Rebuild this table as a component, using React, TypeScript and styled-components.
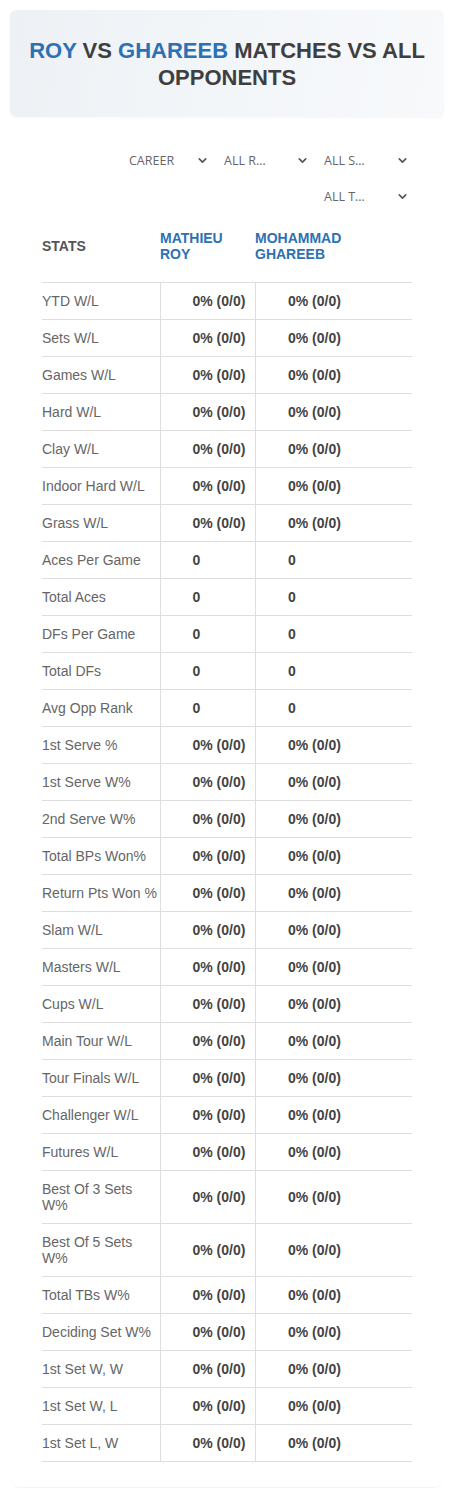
import React from "react";
import styled, { createGlobalStyle } from "styled-components";
import { ChevronDown } from "lucide-react";

const Global = createGlobalStyle`
  html, body { margin: 0; padding: 0; background: #ffffff; }
  body { font-family: "Liberation Sans", Arial, sans-serif; }
  * { box-sizing: border-box; }
`;

const Page = styled.div`
  padding: 10px 11px 10px 10px;
  display: flex;
  flex-direction: column;
  gap: 8px;
`;

const Hero = styled.header`
  height: 107px;
  border-radius: 6px;
  background: linear-gradient(100deg, #edf1f5 0%, #f3f6f9 50%, #f7f9fb 100%);
  box-shadow: 0 1px 2px rgba(0, 0, 0, 0.03);
  display: flex;
  align-items: center;
  justify-content: center;
  padding: 0 12px;
`;

const Title = styled.h1`
  margin: 0;
  text-align: center;
  font-family: "Liberation Sans", Arial, sans-serif;
  font-weight: 700;
  font-size: 22px;
  line-height: 27px;
  color: #3f3f3f;
  text-transform: uppercase;
`;

const Blue = styled.span`
  color: #2c71b3;
`;

const Card = styled.section`
  margin: 0 2px;
  background: #ffffff;
  border-radius: 8px;
  box-shadow: 0 1px 1px rgba(0, 0, 0, 0.05);
  padding: 17px 30px 25px 30px;
`;

const Filters = styled.div`
  display: flex;
  flex-wrap: wrap;
  justify-content: flex-end;
`;

const Select = styled.div<{ $w: number }>`
  width: ${(p) => p.$w}px;
  height: 36px;
  display: flex;
  align-items: center;
  justify-content: space-between;
  padding: 0 3px 0 12px;
  font-family: "Open Sans", "Liberation Sans", sans-serif;
  font-size: 12.5px;
  color: #666;
  text-transform: uppercase;
  svg {
    color: #555;
  }
`;

const Table = styled.table`
  width: 100%;
  border-collapse: collapse;
  table-layout: fixed;
`;

const HeadCell = styled.th<{ $blue?: boolean }>`
  text-align: left;
  vertical-align: middle;
  padding: 16px 8px 20px 0;
  font-size: 14px;
  line-height: 16px;
  font-weight: 700;
  text-transform: uppercase;
  color: ${(p) => (p.$blue ? "#2c71b3" : "#555")};
  border-bottom: 1px solid #dedede;
`;

const Row = styled.tr`
  border-bottom: 1px solid #dedede;
`;

const Label = styled.td`
  padding: 10px 0;
  font-size: 14px;
  line-height: 16px;
  color: #666;
  vertical-align: middle;
`;

const Value = styled.td<{ $divider?: boolean }>`
  padding: 10px 10px 10px 0;
  font-size: 14px;
  line-height: 16px;
  font-weight: 700;
  color: #444;
  text-align: right;
  vertical-align: middle;
  border-left: ${(p) => (p.$divider ? "1px solid #dedede" : "none")};
  white-space: nowrap;
`;

const Empty = styled.td``;

const pct = "0% (0/0)";
const rows: [string, string][] = [
  ["YTD W/L", pct],
  ["Sets W/L", pct],
  ["Games W/L", pct],
  ["Hard W/L", pct],
  ["Clay W/L", pct],
  ["Indoor Hard W/L", pct],
  ["Grass W/L", pct],
  ["Aces Per Game", "0"],
  ["Total Aces", "0"],
  ["DFs Per Game", "0"],
  ["Total DFs", "0"],
  ["Avg Opp Rank", "0"],
  ["1st Serve %", pct],
  ["1st Serve W%", pct],
  ["2nd Serve W%", pct],
  ["Total BPs Won%", pct],
  ["Return Pts Won %", pct],
  ["Slam W/L", pct],
  ["Masters W/L", pct],
  ["Cups W/L", pct],
  ["Main Tour W/L", pct],
  ["Tour Finals W/L", pct],
  ["Challenger W/L", pct],
  ["Futures W/L", pct],
  ["Best Of 3 Sets W%", pct],
  ["Best Of 5 Sets W%", pct],
  ["Total TBs W%", pct],
  ["Deciding Set W%", pct],
  ["1st Set W, W", pct],
  ["1st Set W, L", pct],
  ["1st Set L, W", pct],
];

const ValueText = styled.span`
  display: inline-block;
  width: 52px;
  text-align: left;
`;

export default function App() {
  return (
    <>
      <Global />
      <Page>
        <Hero>
          <Title>
            <Blue>Roy</Blue> vs <Blue>Ghareeb</Blue> Matches vs All Opponents
          </Title>
        </Hero>
        <Card>
          <Filters>
            <Select $w={95}>
              <span>Career</span>
              <ChevronDown size={13} strokeWidth={3} />
            </Select>
            <Select $w={100}>
              <span>All R…</span>
              <ChevronDown size={13} strokeWidth={3} />
            </Select>
            <Select $w={100}>
              <span>All S…</span>
              <ChevronDown size={13} strokeWidth={3} />
            </Select>
            <Select $w={100}>
              <span>All T…</span>
              <ChevronDown size={13} strokeWidth={3} />
            </Select>
          </Filters>
          <Table>
            <colgroup>
              <col style={{ width: 118 }} />
              <col style={{ width: 95 }} />
              <col style={{ width: 95 }} />
              <col />
            </colgroup>
            <thead>
              <tr>
                <HeadCell>Stats</HeadCell>
                <HeadCell $blue>Mathieu Roy</HeadCell>
                <HeadCell $blue>Mohammad Ghareeb</HeadCell>
                <HeadCell />
              </tr>
            </thead>
            <tbody>
              {rows.map(([label, v]) => (
                <Row key={label}>
                  <Label>{label}</Label>
                  <Value $divider>
                    <ValueText>{v}</ValueText>
                  </Value>
                  <Value $divider>
                    <ValueText>{v}</ValueText>
                  </Value>
                  <Empty />
                </Row>
              ))}
            </tbody>
          </Table>
        </Card>
      </Page>
    </>
  );
}
